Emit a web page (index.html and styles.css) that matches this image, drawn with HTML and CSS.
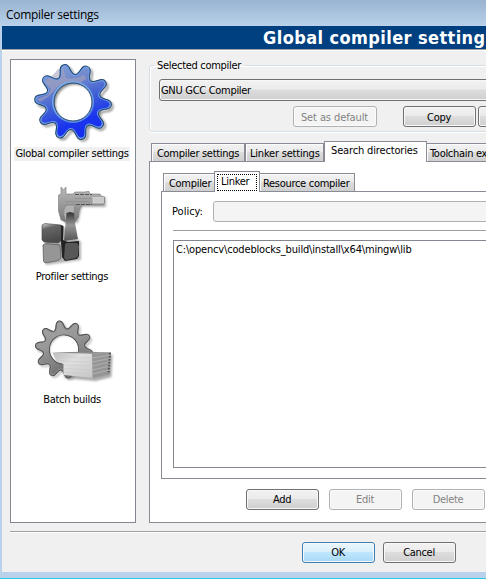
FILE: index.html
```
<!DOCTYPE html>
<html lang="en">
<head>
<meta charset="utf-8">
<title>Compiler settings</title>
<link rel="stylesheet" href="styles.css">
</head>
<body>
<div class="window">
  <div class="titlebar"><span>Compiler settings</span></div>
  <main class="client">
    <h1 class="banner"><span>Global compiler setting</span></h1>
    <div class="columns">
      <nav class="sidebar">
        <div class="category selected">
          <svg class="icon" width="92" height="88" viewBox="-46 -42 92 88">
            <defs>
              <path id="tooth" d="M-8.34-25.68C-3.2-27.3-6.8-37.5 0-37.5C6.8-37.5 3.2-27.3 8.34-25.68"/>
              <g id="rim">
                <use href="#tooth" transform="rotate(-14)"/><use href="#tooth" transform="rotate(22)"/>
                <use href="#tooth" transform="rotate(58)"/><use href="#tooth" transform="rotate(94)"/>
                <use href="#tooth" transform="rotate(130)"/><use href="#tooth" transform="rotate(166)"/>
                <use href="#tooth" transform="rotate(202)"/><use href="#tooth" transform="rotate(238)"/>
                <use href="#tooth" transform="rotate(274)"/><use href="#tooth" transform="rotate(310)"/>
              </g>
              <mask id="gearMask" maskUnits="userSpaceOnUse" x="-46" y="-46" width="92" height="92">
                <g fill="#fff" stroke="#fff" stroke-width=".5"><use href="#rim"/><circle r="27"/></g>
                <circle r="19.5" fill="#000"/>
              </mask>
              <linearGradient id="blue" x1=".3" y1="0" x2=".65" y2="1">
                <stop offset="0" stop-color="#8aa9dc"/><stop offset=".3" stop-color="#7088cc"/>
                <stop offset=".5" stop-color="#4060d6"/><stop offset=".72" stop-color="#1a34ee"/><stop offset="1" stop-color="#1026ee"/>
              </linearGradient>
              <linearGradient id="edge" gradientUnits="userSpaceOnUse" x1="-20" y1="-34" x2="20" y2="34">
                <stop offset="0" stop-color="#86b8ee"/><stop offset=".5" stop-color="#6fa2e6"/><stop offset="1" stop-color="#4a78de"/>
              </linearGradient>
              <linearGradient id="steel" x1=".1" y1="0" x2=".6" y2="1">
                <stop offset="0" stop-color="#a8a8a8"/><stop offset=".45" stop-color="#989898"/><stop offset="1" stop-color="#606060"/>
              </linearGradient>
              <filter id="soft" x="-20%" y="-20%" width="140%" height="140%"><feGaussianBlur stdDeviation="1.3"/></filter>
            </defs>
            <g filter="url(#soft)" opacity=".6" transform="translate(2.2 2.2)" fill="none" stroke="#444">
              <use href="#rim" stroke-width="2"/><circle r="23" stroke-width="7"/>
            </g>
            <rect x="-46" y="-46" width="92" height="92" fill="url(#blue)" mask="url(#gearMask)"/>
            <path d="M-29-20Q-18-28-15-33L-10-34L-7-24Q4-22 10-27L14-24Q7-17-3-20Q-15-18-20-10L-25-5L-33 0L-36-3L-25-7L-22-13Z" fill="#a7a2bb" opacity=".6"/>
            <g fill="none" stroke="#6f9fe8" stroke-width="1.8"><use href="#rim"/><circle r="20" stroke-width="2" stroke="url(#edge)"/></g>
            <g fill="none" stroke="#25476f" stroke-width="1"><use href="#rim" transform="scale(1.025)"/><circle r="19"/></g>
          </svg>
          <span class="label">Global compiler settings</span>
        </div>
        <div class="category">
          <svg class="icon" width="92" height="88" viewBox="26 182 92 88">
            <defs>
              <linearGradient id="dark" x1="0" y1="0" x2=".3" y2="1"><stop offset="0" stop-color="#d8d8d8"/><stop offset=".3" stop-color="#666"/><stop offset="1" stop-color="#4a4a4a"/></linearGradient>
              <linearGradient id="mid" x1="0" y1="0" x2="0" y2="1"><stop offset="0" stop-color="#333"/><stop offset=".45" stop-color="#969696"/><stop offset="1" stop-color="#555"/></linearGradient>
              <linearGradient id="metal" x1="0" y1="0" x2="0" y2="1"><stop offset="0" stop-color="#b8b8b8"/><stop offset=".5" stop-color="#9a9a9a"/><stop offset="1" stop-color="#777"/></linearGradient>
            </defs>
            <g filter="url(#soft)" opacity=".45" transform="translate(2 2)" fill="#555"><path d="M41 223L61 224L78 239V257L43 262ZM58 194H103V204H79L75 220H61Z"/></g>
            <path d="M60 186L62.500 189L65 186V193H72L74 191H84L85.500 190.500H88L89 193H99L100 195L103.500 196V202L102 204H81Q77 209 77.500 216L74 221L72 220L74 204H65Q62 208 63 214L65 221L60 219L57.500 210V194L60 193Z" fill="url(#metal)" stroke="#777" stroke-width=".6"/>
            <path d="M74 193.500H91M75 203.500H91" stroke="#555" stroke-dasharray="4 1"/>
            <path d="M64 200.500H88M74 197.500H90" stroke="#888" stroke-width=".6"/>
            <rect x="92" y="196.500" width="10.500" height="5.500" fill="#c9c9c9" stroke="#ddd" stroke-width=".6"/>
            <path d="M41 224L44 222.500L60 224L61 239L57 242L43 241L41 239Z" fill="url(#dark)" stroke="#444" stroke-width=".6"/>
            <path d="M60 224L62.500 225L62 239L67 241L78 240V255L76 258L64 260L61 256L60 240Z" fill="#222"/>
            <path d="M65.500 212L69 211L73 212L74 222L77 238L63 240Z" fill="url(#mid)"/>
            <path d="M65 242L76 242L78 245L77 255L75 257L65 259L63 257L64 244Z" fill="#575757"/>
            <path d="M42 244L45 242.500L59 244L60 257L57 259.500L44 262L42.500 260Z" fill="#969696" stroke="#606060" stroke-width=".8"/>
          </svg>
          <span class="label">Profiler settings</span>
        </div>
        <div class="category">
          <svg class="icon" width="92" height="88" viewBox="26 305 92 88">
            <defs><linearGradient id="paper" x1="0" y1="0" x2="1" y2="1"><stop offset="0" stop-color="#bbb"/><stop offset=".4" stop-color="#dfdfdf"/><stop offset="1" stop-color="#c4c4c4"/></linearGradient></defs>
            <g transform="translate(63 348.500) rotate(4) scale(.75)">
              <g filter="url(#soft)" opacity=".5" transform="translate(2.500 2.500)" fill="none" stroke="#444"><use href="#rim" stroke-width="2"/><circle r="24" stroke-width="5"/></g>
              <rect x="-46" y="-46" width="92" height="92" fill="url(#steel)" mask="url(#gearMask)"/>
              <g fill="none" stroke="#959595" stroke-width="2.500"><use href="#rim"/></g>
              <g fill="none" stroke="#555" stroke-width="1.300"><use href="#rim" transform="scale(1.025)"/><circle r="19.500"/></g>
            </g>
            <path d="M62 355L94 351L110 352L109 374L93 378L62 375Z" fill="#555" opacity=".5" filter="url(#soft)" transform="translate(1.500 2)"/>
            <path d="M51.500 351.500L91 351L94 353L92 377L62.500 374V363L55 360Z" fill="url(#paper)"/>
            <path d="M91 353L110 351L108.500 373.500L91.500 377Z" fill="#969696"/>
            <path d="M52 351.500L80 350.700L110 351.500L92 352.800Z" fill="#888"/>
            <g fill="none" stroke="#c6c6c6" stroke-width=".5"><path d="M54 356L91 357L109 354M57 360L91 361L109 357.500M62 364L91 365L109 361M62 367.500L91 369L109 365M62 371L91 373L109 369"/></g>
            <path d="M109 352L107.500 373" stroke="#555" stroke-width="2" stroke-dasharray="1.500 1.500"/>
          </svg>
          <span class="label">Batch builds</span>
        </div>
      </nav>
      <section class="content">
        <fieldset class="group">
          <legend>Selected compiler</legend>
          <div class="combo">GNU GCC Compiler</div>
          <div class="group-buttons">
            <button class="btn" disabled>Set as default</button>
            <button class="btn copy">Copy</button>
            <button class="btn"></button>
          </div>
        </fieldset>
        <div class="tabs">
          <div class="tab t1">Compiler settings</div>
          <div class="tab t2">Linker settings</div>
          <div class="tab active t3">Search directories</div>
          <div class="tab t4">Toolchain ex</div>
        </div>
        <div class="page">
          <div class="tabs inner">
            <div class="tab i1">Compiler</div>
            <div class="tab active i2"><span class="focus">Linker</span></div>
            <div class="tab i3">Resource compiler</div>
          </div>
          <div class="inner-page">
            <div class="policy"><span>Policy:</span><div class="combo disabled"></div></div>
            <hr class="rule">
            <div class="list"><span>C:\opencv\codeblocks_build\install\x64\mingw\lib</span></div>
          </div>
          <div class="list-buttons">
            <button class="btn">Add</button>
            <button class="btn" disabled>Edit</button>
            <button class="btn" disabled>Delete</button>
          </div>
        </div>
      </section>
    </div>
    <hr class="rule bottom">
    <footer class="actions">
      <button class="btn default">OK</button>
      <button class="btn">Cancel</button>
    </footer>
  </main>
</div>
</body>
</html>
```
FILE: styles.css
```
* { box-sizing: border-box; }
body {
  margin: 0;
  overflow: hidden;
  font: 11px/13px "DejaVu Sans Condensed", "DejaVu Sans", sans-serif;
  font-stretch: condensed;
  letter-spacing: -0.3px;
  color: #000;
}
.window {
  width: 486px;
  height: 579px;
  padding: 0 0 6px 2px;
  overflow: hidden;
  display: flex;
  flex-direction: column;
  background: #b9d1ea;
  border-bottom: 1px solid #28cde2;
  white-space: nowrap;
}
.titlebar {
  height: 26px;
  flex: none;
  margin-left: -2px;
  padding: 6px 0 0 6px;
  background: linear-gradient(#99b4d1, #b9d1ea);
  font: 12px/17px "Open Sans", "Noto Sans", sans-serif;
  letter-spacing: -0.3px;
}
.client { flex: 1; min-height: 0; background: #f0f0f0; }
.banner {
  margin: 0;
  height: 25px;
  padding-left: 261px;
  background: #004080;
  border-bottom: 1px solid #fff;
  box-shadow: inset 0 -1px #a0a0a0;
  color: #fff;
  font: bold 18px/24px "DejaVu Sans Condensed", "DejaVu Sans", sans-serif;
  font-stretch: condensed;
  letter-spacing: 0.4px;
}
.columns { display: flex; margin-top: 8px; padding-left: 8px; height: 464px; }
.sidebar {
  width: 126px;
  flex: none;
  background: #fff;
  border: 1px solid #828790;
}
.category {
  height: 123px;
  display: flex;
  flex-direction: column;
  align-items: center;
}
.icon { flex: none; margin-left: -1px; }
.label { height: 14px; margin: -1px 2px 0 0; padding: 0 1px; line-height: 13px; }
.selected .label { background: #f0f0f0; }
.content { width: 420px; flex: none; margin-left: 13px; }
.group {
  height: 73px;
  margin: 0;
  padding: 7px 0 0 9px;
  border: 1px solid #d5dfe5;
  border-radius: 3px;
  box-shadow: inset 1px 1px #fff, 0 1px #fff;
}
.group legend { margin-left: -5px; padding: 0 3px; line-height: 13px; }
.combo {
  height: 22px;
  padding-left: 1px;
  border: 1px solid #707070;
  border-radius: 3px;
  line-height: 21px;
  background: linear-gradient(#f2f2f2 0, #ebebeb 45%, #dddddd 50%, #cfcfcf);
  box-shadow: inset 0 0 0 1px #f7f7f7;
}
.combo.disabled { height: 21px; background: #f4f4f4; border-color: #adb2b5; box-shadow: none; }
.btn {
  width: 73px;
  height: 21px;
  padding: 0 1px 0 0;
  border: 1px solid #707070;
  border-radius: 3px;
  font: inherit;
  letter-spacing: inherit;
  color: #000;
  background: linear-gradient(#f2f2f2 0, #ebebeb 45%, #dddddd 50%, #cfcfcf);
  box-shadow: inset 0 0 0 1px #f8f8f8;
}
.btn:disabled { color: #838383; background: #f4f4f4; border-color: #adb2b5; box-shadow: inset 0 0 0 1px #fcfcfc; }
.btn.default {
  border-color: #3c7fb1;
  background: linear-gradient(#eaf6fd 0, #d9f0fc 45%, #bee6fd 50%, #a7d9f5);
}
.group-buttons { display: flex; padding: 5px 0 0 134px; }
.group-buttons .btn { flex: none; padding-top: 1px; }
.group-buttons .btn:first-child { width: 84px; letter-spacing: -0.1px; }
.group-buttons .copy { margin: 0 2px 0 26px; }
.tabs { display: flex; align-items: flex-end; height: 21px; margin-top: 8px; padding-left: 2px; position: relative; }
.tab {
  height: 18px;
  flex: none;
  border: 1px solid #898c95;
  border-bottom: 0;
  padding-left: 5px;
  line-height: 19px;
  background: linear-gradient(#f2f2f2 0, #ebebeb 45%, #dddddd 50%, #cfcfcf);
  box-shadow: inset 1px 1px #fcfcfc;
}
.tab.active { height: 21px; margin-bottom: -1px; background: #fff; line-height: 18px; }
.t1 { width: 94px; }
.t2 { width: 79px; padding-left: 4px; letter-spacing: -0.2px; }
.t3 { width: 103px; padding-left: 6px; letter-spacing: -0.15px; }
.t4 { width: 130px; padding-left: 3px; border-left: 0; }
.page {
  height: 362px;
  padding-left: 11px;
  background: #fff;
  border: 1px solid #898c95;
}
.inner { margin-top: 8px; }
.i1 { width: 52px; }
.tab.i2 { width: 46px; padding: 2px; margin-left: -1px; }
.focus { display: block; height: 17px; border: 1px dotted #000; padding-left: 3px; line-height: 14px; }
.i3 { width: 95px; padding-left: 3px; border-left: 0; }
.inner-page { height: 288px; padding: 9px 0 0 11px; border: 1px solid #898c95; }
.policy { display: flex; align-items: center; }
.policy span { width: 41px; margin-left: -1px; flex: none; letter-spacing: 0; }
.policy .combo { flex: 1; }
.rule { height: 2px; margin: 8px 0 0; border: 0; border-top: 1px solid #a0a0a0; background: #fff; }
.list { height: 228px; margin-top: 8px; padding: 2px 0 0 2px; border: 1px solid #828790; }
.list span { letter-spacing: -0.17px; }
.list-buttons { display: flex; gap: 10px; padding: 10px 0 0 85px; }
.rule.bottom { margin: 8px 0 0 8px; }
.actions { display: flex; gap: 8px; padding: 9px 0 0 300px; }
```
